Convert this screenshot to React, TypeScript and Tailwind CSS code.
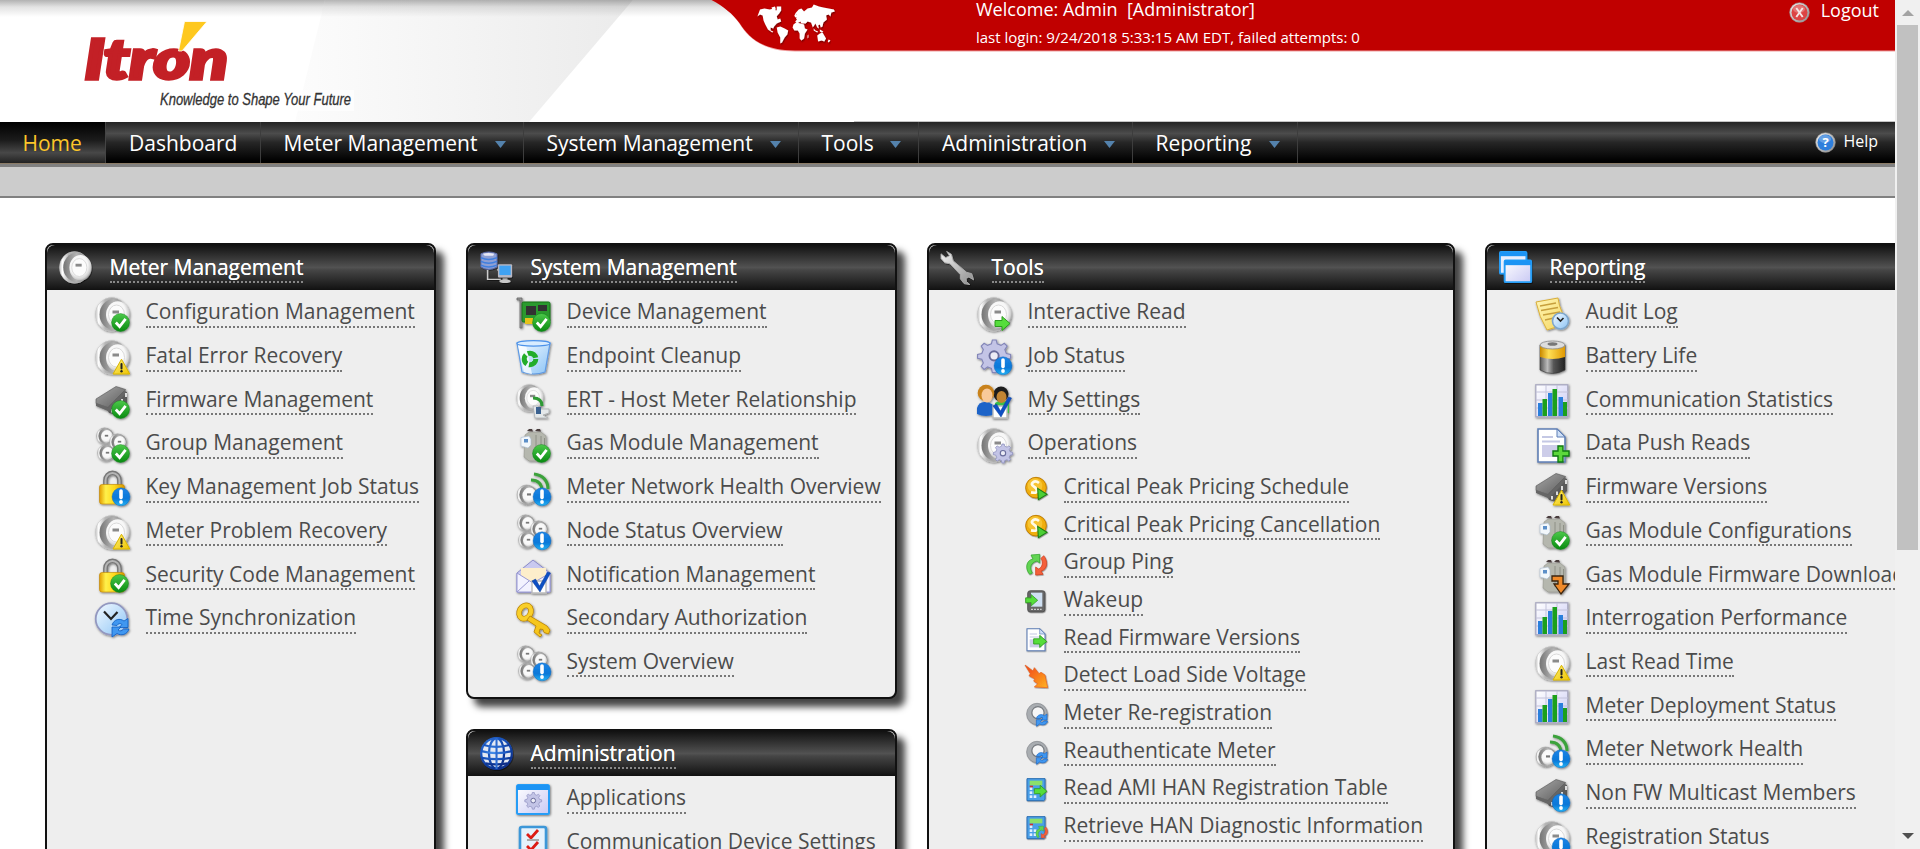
import React from "react";

type IconName =
  | "meterCheck" | "meterWarn" | "meterArrow" | "meterGear" | "meterInfo" | "chipCheck" | "chipWarn" | "chipInfo"
  | "groupCheck" | "groupInfo" | "lockInfo" | "lockCheck" | "clockSync" | "card" | "bin" | "ert" | "gasCheck"
  | "gasDown" | "signal" | "mail" | "key" | "app" | "checklist" | "gearInfo" | "users" | "note" | "battery"
  | "chart" | "docPlus" | "coin" | "ping" | "wakeup" | "docArrow" | "bolt" | "meterSync" | "calcArrow" | "calcPing"
  | "meter" | "servers" | "wrench" | "windows" | "globe";

function Defs() {
  return (
    <svg className="absolute h-0 w-0" aria-hidden="true">
      <defs>
        <linearGradient id="rim" x1="0" y1="0" x2="1" y2="0">
          <stop offset="0" stopColor="#c4c4c4" /><stop offset=".1" stopColor="#fff" /><stop offset=".3" stopColor="#b5b5b5" />
          <stop offset=".7" stopColor="#999" /><stop offset="1" stopColor="#aaa" />
        </linearGradient>
        <linearGradient id="well" x1="0" y1="0" x2="1" y2="0"><stop offset="0" stopColor="#757575" /><stop offset=".5" stopColor="#b4b4b4" /><stop offset="1" stopColor="#8a8a8a" /></linearGradient>
        <radialGradient id="face" cx=".42" cy=".4" r=".62">
          <stop offset="0" stopColor="#fff" /><stop offset=".65" stopColor="#f6f6f6" /><stop offset=".88" stopColor="#cfcfcf" /><stop offset="1" stopColor="#999" />
        </radialGradient>
        <linearGradient id="green" x1="0" y1="0" x2="0" y2="1"><stop offset="0" stopColor="#4cc94a" /><stop offset="1" stopColor="#078a10" /></linearGradient>
        <linearGradient id="blue" x1="0" y1="0" x2="0" y2="1"><stop offset="0" stopColor="#1d84e6" /><stop offset=".6" stopColor="#0878d8" /><stop offset="1" stopColor="#25b4f5" /></linearGradient>
        <linearGradient id="yellow" x1="0" y1="0" x2="1" y2="1"><stop offset="0" stopColor="#fff17a" /><stop offset="1" stopColor="#eec400" /></linearGradient>
        <linearGradient id="lock" x1="0" y1="0" x2="1" y2="0"><stop offset="0" stopColor="#e39c00" /><stop offset=".25" stopColor="#fff04a" /><stop offset=".6" stopColor="#ffd81a" /><stop offset="1" stopColor="#d79600" /></linearGradient>
        <linearGradient id="steel" x1="0" y1="0" x2="1" y2="1"><stop offset="0" stopColor="#a8a8a8" /><stop offset="1" stopColor="#5c5c5c" /></linearGradient>
        <linearGradient id="silver" x1="0" y1="0" x2="1" y2="1"><stop offset="0" stopColor="#f4f4f4" /><stop offset="1" stopColor="#8b8b8b" /></linearGradient>
        <linearGradient id="lilac" x1="0" y1="0" x2="1" y2="1"><stop offset="0" stopColor="#fff" /><stop offset="1" stopColor="#c9c9f4" /></linearGradient>
        <linearGradient id="sky" x1="0" y1="0" x2="1" y2="1"><stop offset="0" stopColor="#f4faff" /><stop offset="1" stopColor="#8cc4f6" /></linearGradient>
        <linearGradient id="batt" x1="0" y1="0" x2="1" y2="0"><stop offset="0" stopColor="#555" /><stop offset=".3" stopColor="#bbb" /><stop offset=".55" stopColor="#555" /><stop offset="1" stopColor="#222" /></linearGradient>
        <linearGradient id="gold" x1="0" y1="0" x2="1" y2="0"><stop offset="0" stopColor="#c98800" /><stop offset=".35" stopColor="#ffdf55" /><stop offset="1" stopColor="#e09800" /></linearGradient>
        <linearGradient id="orange" x1="0" y1="0" x2="1" y2="1"><stop offset="0" stopColor="#f0401a" /><stop offset="1" stopColor="#ffb321" /></linearGradient>
        <radialGradient id="earth" cx=".4" cy=".35" r=".7"><stop offset="0" stopColor="#4a94ee" /><stop offset=".6" stopColor="#1a56c0" /><stop offset="1" stopColor="#0a2c86" /></radialGradient>
        <linearGradient id="paper" x1="0" y1="0" x2="1" y2="1"><stop offset="0" stopColor="#fff6b8" /><stop offset="1" stopColor="#f5d55a" /></linearGradient>
        <linearGradient id="header" x1="0" y1="0" x2="1" y2="0"><stop offset="0" stopColor="#fcfcfc" /><stop offset="1" stopColor="#ebebeb" /></linearGradient>
        <linearGradient id="topShade" x1="0" y1="0" x2="0" y2="1"><stop offset="0" stopColor="#000" stopOpacity=".28" /><stop offset=".4" stopColor="#000" stopOpacity=".1" /><stop offset="1" stopColor="#000" stopOpacity="0" /></linearGradient>
        <filter id="sh" x="-20%" y="-20%" width="150%" height="150%"><feDropShadow dx="0.8" dy="1" stdDeviation="0.8" floodOpacity=".5" /></filter>
      </defs>
    </svg>
  );
}

const Check = () => (
  <g><circle cx="25.5" cy="25.5" r="9" fill="url(#green)" stroke="#0a7a12" strokeWidth=".4" />
    <path d="M20.800 25.500l3.800 4 6-7.600" fill="none" stroke="#fff" strokeWidth="2.800" /></g>
);
const Info = () => (
  <g><circle cx="26" cy="25.800" r="9" fill="url(#blue)" stroke="#0a5fb4" strokeWidth=".4" />
    <path d="M26 20v6.600" stroke="#fff" strokeWidth="3.600" strokeLinecap="round" /><circle cx="26" cy="31" r="1.900" fill="#fff" /></g>
);
const Warn = () => (
  <g><path d="M26.500 19.200L34.800 34H18z" fill="url(#yellow)" stroke="#d8b400" strokeLinejoin="round" />
    <path d="M26.500 24v4.500" stroke="#222" strokeWidth="2" strokeLinecap="round" /><circle cx="26.500" cy="31.300" r="1.200" fill="#222" /></g>
);
const Meter = () => (
  <g><ellipse cx="16.500" cy="17.400" rx="16" ry="16.800" fill="url(#rim)" stroke="#c6c6c6" strokeWidth=".6" />
    <ellipse cx="18.500" cy="17.400" rx="14" ry="15.200" fill="url(#well)" />
    <ellipse cx="22.800" cy="17.800" rx="11.800" ry="13.600" fill="url(#face)" />
    <ellipse cx="21.500" cy="17.500" rx="8" ry="9.500" fill="#fcfcfc" stroke="#dadada" />
    <rect x="17.500" y="13.500" width="6.500" height="3" fill="#8a8a8a" /></g>
);
const SmallMeter = ({ x, y }: { x: number; y: number }) => (
  <g transform={`translate(${x} ${y})`}><ellipse cx="7.500" cy="8" rx="8" ry="8.200" fill="url(#rim)" stroke="#999" strokeWidth=".4" />
    <ellipse cx="9" cy="8" rx="7.600" ry="7.800" fill="url(#well)" />
    <ellipse cx="10" cy="8.500" rx="6" ry="6.500" fill="url(#face)" />
    <rect x="7.800" y="6.800" width="3.400" height="1.800" fill="#777" /></g>
);
const Group = () => (<g><SmallMeter x={2} y={0} /><SmallMeter x={15} y={6} /><SmallMeter x={3} y={17} /></g>);
const Chip = () => (
  <g><path d="M11 23l3 6 7 2 11-11V8l-3-1z" fill="#5a5a5a" />
    <path d="M1 15L21 2.5l9.500 3L13 23.500 1 19.500z" fill="url(#steel)" stroke="#555" strokeWidth=".6" />
    <path d="M13 23.500L30.500 5.500V10L14 27.500 1 22v-3z" fill="#666" />
    <path d="M17 25v3.500M22 20.500V24M27 15v4M31 9v4" stroke="#ddd" strokeWidth="2" /></g>
);
const Lock = () => (
  <g><path d="M10.500 15V9.500a6.500 7 0 0 1 14 0V15" fill="none" stroke="#777" strokeWidth="4.800" />
    <path d="M10.500 15V9.500a6.500 7 0 0 1 14 0V15" fill="none" stroke="#b5b5b5" strokeWidth="2" />
    <rect x="4.500" y="13.500" width="25" height="19.500" rx="2.500" fill="url(#lock)" stroke="#c08600" strokeWidth=".6" /></g>
);
const Gas = () => (
  <g><path d="M9 7l4-3h12l5 4v22l-6 3H13l-5-4z" fill="#b5b7ae" stroke="#94968d" strokeWidth=".6" />
    <path d="M11 3l2-2h3l1 2.500zM19 3l2-2h3l1 2.500z" fill="#4a3c3c" />
    <path d="M20 7v21M25 8v20M28.500 10v16" stroke="#8e9086" />
    <path d="M5 9.500l8-1.500 2 3v6l-3 3-7-2z" fill="#f2f7fb" stroke="#abc" strokeWidth=".6" /><rect x="8" y="11" width="4" height="3.500" fill="#5b8fc8" /></g>
);
const gearPath = "M16 0h4l1 4 4 1.600 3.400-2.200 3 3L29 10l1.600 4 4.400 1v4l-4.400 1L29 24l2.200 3.600-3 3L25 28l-4 1.600-1 4.400h-4l-1-4.400L11 28l-3.600 2.600-3-3L6.600 24 5 20l-4.400-1v-4L5 14l1.600-4L4.400 6.400l3-3L11 5.600 15 4z";
const Gear = ({ t = "" }: { t?: string }) => (
  <g transform={t}><path d={gearPath} fill="#c3c4e6" stroke="#8386b8" strokeWidth="1.200" /><circle cx="17.800" cy="16.500" r="4.800" fill="#ececf6" stroke="#6a6d9c" strokeWidth="2" /></g>
);
const Arrow = ({ t }: { t: string }) => (
  <path transform={t} d="M0 4h7V0l8 7-8 7v-4H0z" fill="#55dd3a" stroke="#2c9a1e" strokeWidth="1" />
);
const SyncArrows = () => (
  <g fill="#3f97f0" stroke="#0d5cc0" strokeWidth=".8"><path d="M17 23c2-6 8-7 12-4l4-2.500v9h-9l3-3c-2-1.500-4-1-5 1z" /><path d="M34 27c-2 6-8 7-12 4.500L17 35V25h9l-3 3c2 1.500 4 1 5.500-1z" /></g>
);
const Ping = () => (
  <g><path d="M7 32C0 24 1 11 12 9L9 3 22 2v13l-4-3c-9 2-12 10-7 18z" fill="#62d452" stroke="#2fa42a" />
    <path d="M28 4c7 8 6 21-4 23l3 5-11 1V21l4 3c6-2 8-10 4-16z" fill="#f4603a" stroke="#d03a18" /></g>
);
const Doc = () => (
  <g><path d="M3 1h19l8 8v25H3z" fill="#fff" stroke="#5f7fb5" strokeWidth="1.600" /><path d="M22 1l8 8h-8z" fill="#cfe0f7" stroke="#5f7fb5" />
    <path d="M7 9h11M7 13.500h18" stroke="#c4c8e4" strokeWidth="1.800" /><rect x="7" y="17" width="18" height="12" fill="#cdcde9" /></g>
);
const Calc = () => (
  <g><path d="M3 1h27v31l-2 2H3z" fill="#4a9fe8" stroke="#2b6fb4" strokeWidth="1.500" /><rect x="7" y="4" width="19" height="7" fill="#8be06a" />
    <g fill="#dfefff"><rect x="7" y="14" width="4" height="4" /><rect x="7" y="20" width="4" height="4" /><rect x="7" y="26" width="4" height="4" /><rect x="13" y="26" width="4" height="4" /><rect x="13" y="20" width="4" height="4" /></g>
    <rect x="7" y="11.500" width="5" height="2.500" fill="#c33" /></g>
);
const BlueTick = () => (
  <g><path d="M16 22h14v12H16z" fill="#fff" stroke="#bbb" strokeWidth="1.400" /><path d="M16 22l3.500-2 4 7 8-14 3 1L24 33z" fill="#0e50c4" stroke="#0a3c98" strokeWidth=".5" /></g>
);

function art(name: IconName): React.ReactNode {
  switch (name) {
    case "meter": return <Meter />;
    case "meterCheck": return <><Meter /><Check /></>;
    case "meterWarn": return <><Meter /><Warn /></>;
    case "meterInfo": return <><Meter /><Info /></>;
    case "meterArrow": return <><Meter /><Arrow t="translate(18 19.500)" /></>;
    case "meterGear": return <><Meter /><Gear t="translate(16 16) scale(.56)" /></>;
    case "meterSync": return <><g transform="translate(2 0) scale(.97)"><ellipse cx="16.500" cy="17" rx="16" ry="16.500" fill="#a9adb1" stroke="#84888c" /><circle cx="18" cy="15" r="9.500" fill="#f6f6f6" stroke="#777b80" strokeWidth="2" /></g><SyncArrows /></>;
    case "chipCheck": return <><Chip /><Check /></>;
    case "chipWarn": return <><Chip /><Warn /></>;
    case "chipInfo": return <><Chip /><Info /></>;
    case "groupCheck": return <><Group /><Check /></>;
    case "groupInfo": return <><Group /><Info /></>;
    case "lockInfo": return <><Lock /><Info /></>;
    case "lockCheck": return <><Lock /><g transform="translate(-1 -1)"><Check /></g></>;
    case "clockSync": return <><circle cx="16.500" cy="17" r="15.800" fill="url(#sky)" stroke="#9398c0" strokeWidth="1.800" /><path d="M9 9.500l7 7.500 6.500-7" fill="none" stroke="#222" strokeWidth="2.200" /><SyncArrows /></>;
    case "card": return <><path d="M1 1h5v30H4V3H1z" fill="#999" stroke="#666" strokeWidth=".8" /><rect x="6" y="5" width="28" height="20" rx="1.500" fill="#2a9a2e" stroke="#16701a" /><rect x="10" y="9" width="10" height="9" fill="#333" /><rect x="22" y="8" width="9" height="6" fill="#333" /><rect x="9" y="21" width="8" height="6" fill="#e6c21a" /><Check /></>;
    case "bin": return <><path d="M1 3l5 29q12 4 23 0l5-29z" fill="url(#sky)" stroke="#5f9ae4" strokeWidth="1.200" /><path d="M2 5l6 27q6 2 8 2L10 5z" fill="#fff" opacity=".7" /><ellipse cx="17.500" cy="3.400" rx="16.500" ry="2.800" fill="#d8ecff" stroke="#4c92ea" strokeWidth="1.200" /><circle cx="14" cy="19" r="5.800" fill="none" stroke="#23ad2a" strokeWidth="5" strokeDasharray="10 2.150" /><path d="M14 11l3 2-3 3M7 22l1-4 3 2M20 22l-3 3-1-4" fill="#23ad2a" /></>;
    case "ert": return <><g transform="scale(.8)"><Meter /></g><path d="M17 14c7 0 9 4 9 8" fill="none" stroke="#2f9a36" strokeWidth="3" /><path d="M17 22h5l3 3h8v4l-6 2 5 3H19z" fill="#e4e8ea" stroke="#a9adb0" strokeWidth=".8" /><rect x="20" y="23" width="5" height="7" fill="#3a6290" /></>;
    case "gasCheck": return <><Gas /><Check /></>;
    case "gasDown": return <><Gas /><path d="M17 17h11v8h6l-8 10-7-10h4v-3h-6z" fill="#f08a2c" stroke="#3a2410" strokeWidth="1.300" /></>;
    case "signal": return <><g transform="translate(1 13) scale(1.200)"><SmallMeter x={0.5} y={1} /></g><path d="M15 9c7 0 11 4 11 11M18 3c9 1 14 7 14 15" fill="none" stroke="#3ba23a" strokeWidth="3" /><Info /></>;
    case "mail": return <><path d="M1 14L17 1l17 13v19H1z" fill="#c9c9f0" stroke="#8a8ac8" /><path d="M5 9h25v14H5z" fill="#fdeecb" /><path d="M1 14l16 10 17-10v19H1z" fill="#f3f3ff" stroke="#9a9ad4" /><path d="M1 33l12-11" stroke="#9a9ad4" /><BlueTick /></>;
    case "key": return <><ellipse cx="9" cy="10" rx="5.600" ry="7" transform="rotate(30 9 10)" fill="none" stroke="#b98200" strokeWidth="5.600" /><ellipse cx="9" cy="10" rx="5.600" ry="7" transform="rotate(30 9 10)" fill="none" stroke="#f9cf2c" strokeWidth="4.200" /><path d="M14 14L31 24l3 4-1.500 4-4.500-1.500-1-3-3-.5-1 4 3 2-2 2-6-5 2-6-9-6z" fill="#f6c61e" stroke="#b98200" strokeWidth=".8" /></>;
    case "app": return <><rect x="1" y="2" width="32" height="29" rx="1.500" fill="url(#lilac)" stroke="#259df6" strokeWidth="2" /><path d="M1 2h32v5H1z" fill="#1a94f4" /><Gear t="translate(8.500 9.500) scale(.49)" /></>;
    case "checklist": return <><rect x="4" y="1" width="26" height="33" rx="2" fill="#e6f2fc" stroke="#3d97d8" strokeWidth="2.600" /><path d="M11 8l4 4 7-8M11 20l4 4 7-8" fill="none" stroke="#dc1c14" strokeWidth="2.800" /><path d="M11 14h12M11 26h12" stroke="#aaa" strokeWidth="2" /></>;
    case "gearInfo": return <><Gear t="scale(.96)" /><Info /></>;
    case "users": return <><path d="M18 19q8-6 14 1v9H18z" fill="#3cbf4a" /><circle cx="24" cy="10" r="7.500" fill="#1c1c1c" /><ellipse cx="24.500" cy="13" rx="5" ry="6" fill="#c28432" /><path d="M0 30v-6q2-7 9-6t9 6v6q-9 4-18 0z" fill="#1d63c8" /><circle cx="9" cy="9" r="8.300" fill="#c9821a" /><ellipse cx="10" cy="11.500" rx="5.500" ry="7" fill="#f8c99a" /><BlueTick /></>;
    case "note": return <><path d="M1 5L23 1q1 8 4 14t5 10q-8 5-20 8Q4 20 1 5z" fill="url(#paper)" stroke="#d8ae3a" /><path d="M5 9l16-3M6 13.500l17-3M8 18l17-3M10 23l9-2" stroke="#c79f3c" strokeWidth="1.300" /><circle cx="25.500" cy="24" r="8" fill="url(#sky)" stroke="#7ea6cc" strokeWidth="1.600" /><path d="M22 20.500l3.500 3.500 3-3" fill="none" stroke="#222" strokeWidth="1.600" /></>;
    case "battery": return <><path d="M5 5v25q12.500 7 25 0V5z" fill="url(#batt)" stroke="#333" strokeWidth=".6" /><path d="M5 6v11q12.500 4 25 0V6z" fill="url(#gold)" /><ellipse cx="17.500" cy="5" rx="12.500" ry="4" fill="#ddd" stroke="#888" strokeWidth=".8" /><ellipse cx="17.500" cy="4" rx="5" ry="1.800" fill="#777" /></>;
    case "chart": return <><rect x=".8" y=".8" width="32" height="32" fill="url(#lilac)" stroke="#a9a9c0" strokeWidth="1.300" /><path d="M1 8h32M1 16h32M1 24h32M11 1v32M22 1v32" stroke="#c2c2da" /><g fill="#2a7fdc"><rect x="3" y="19" width="4.500" height="13" /><rect x="13" y="9" width="4.500" height="23" /><rect x="23.500" y="13" width="4.500" height="19" /></g><g fill="#1da01d"><rect x="7.500" y="15" width="4.500" height="17" /><rect x="17.500" y="5" width="4.500" height="27" /><rect x="28" y="18" width="4" height="14" /></g></>;
    case "docPlus": return <><Doc /><path d="M23 18h5v5h6v5h-6v6h-5v-6h-5v-5h5z" fill="#5bd83a" stroke="#127a12" strokeWidth="1.400" /></>;
    case "docArrow": return <><Doc /><Arrow t="translate(13 11) scale(1.300)" /></>;
    case "coin": return <><circle cx="16.500" cy="16" r="15.500" fill="#f0ae10" stroke="#c07d00" strokeWidth="1.400" /><circle cx="15" cy="13" r="11" fill="#fbd24a" opacity=".6" /><path d="M21 9q-5-4-9-1t1 6 5 7-9 2" fill="none" stroke="#fffbe8" strokeWidth="4" /><path d="M19 17l14 9-13 8z" fill="#4ccf34" stroke="#1c7a12" strokeWidth="1.600" /></>;
    case "ping": return <Ping />;
    case "wakeup": return <><rect x="4" y="1" width="26" height="32" rx="4" fill="#666" stroke="#444" /><rect x="9" y="4" width="17" height="21" fill="#cfe0f2" /><path d="M9 29h16" stroke="#ccc" strokeWidth="2" strokeDasharray="3 1.500" /><Arrow t="translate(1 7) scale(1.200)" /></>;
    case "bolt": return <path d="M0 0l12 9 2-5 7 9 3-2 6 4 4 19-20-1 5-5-6-4 2-3-9-5 2-3z" fill="url(#orange)" stroke="#e8601c" />;
    case "calcArrow": return <><Calc /><Arrow t="translate(14 11) scale(1.250)" /></>;
    case "calcPing": return <><Calc /><g transform="translate(15 14) scale(.58)"><Ping /></g></>;
    case "servers": return <><path d="M8 20v10h14M18 20h4" fill="none" stroke="#ccc" strokeWidth="1.500" /><path d="M1 3q8-4 17 0v14q-9 5-17 0z" fill="#8d9fd4" stroke="#5a6aa8" /><path d="M1 7q8 4 17 0M1 11q8 4 17 0M1 15q8 4 17 0" fill="none" stroke="#3f7fe0" strokeWidth="1.600" /><path d="M3 3q6-2 12 0l-1 2H5z" fill="#e8e8f4" /><rect x="19" y="14" width="15" height="14" rx="1" fill="#b8b8c4" /><rect x="20.500" y="15.500" width="12" height="10" fill="#3fa2f2" /><path d="M24 28h5v3h-5z" fill="#888" /><ellipse cx="26.500" cy="32" rx="6" ry="2" fill="#c8c8c8" /></>;
    case "wrench": return <path d="M6 .5l5 3 2 7L27 22.500l5.500 1.500 2 6.500-5-3-3 1.500.5 3.500 3.500 3-6-1-4-5v-4.500L9.500 13.500 4 12.500 0 8V3l5 4 4-2z" fill="url(#silver)" stroke="#aaa" strokeWidth="1" />;
    case "windows": return <><rect x="1" y="1" width="28" height="23" rx="1" fill="#e8eefc" stroke="#259df6" strokeWidth="2" /><path d="M1 1h28v4.500H1z" fill="#1a94f4" /><rect x="6" y="10" width="28" height="23" rx="1" fill="url(#lilac)" stroke="#259df6" strokeWidth="2" /><path d="M6 10h28v5H6z" fill="#1a94f4" /></>;
    case "globe": return <><circle cx="17.500" cy="17.500" r="16.800" fill="#e4e9f2" /><g fill="none" stroke="url(#earth)" strokeWidth="2.400"><circle cx="17.500" cy="17.500" r="16.200" /><ellipse cx="17.500" cy="17.500" rx="8" ry="16" /><path d="M4 8.500q13 4 27 0M1.500 15q16 4 32 0M2 22q15 3 31 0M6 28q11 2 23 0" /></g><path d="M17.500 1v33" stroke="#2b6bd0" strokeWidth="2.200" /></>;
  }
}

function Icon({ name, className }: { name: IconName; className: string }) {
  return (
    <svg viewBox="0 0 36 36" className={`shrink-0 overflow-visible ${className}`}>
      <g filter="url(#sh)">{art(name)}</g>
    </svg>
  );
}

function Item({ icon, label }: { icon: IconName; label: string }) {
  return (
    <li className="flex h-[43.7px] items-start pl-12">
      <Icon name={icon} className="mt-[3.500px] h-[36px] w-[36px]" />
      <a className="mt-[4.400px] ml-[14.500px] border-b-2 border-dotted border-[#777] leading-[28.600px] whitespace-nowrap text-[#4b4b4b]">{label}</a>
    </li>
  );
}

function SubItem({ icon, label }: { icon: IconName; label: string }) {
  return (
    <li className="flex h-[37.650px] items-start pl-24">
      <Icon name={icon} className="mt-[9.500px] h-6 w-6" />
      <a className="mt-[4.400px] ml-[14.500px] border-b-2 border-dotted border-[#777] leading-[28.600px] whitespace-nowrap text-[#4b4b4b]">{label}</a>
    </li>
  );
}

function Panel({ icon, title, className, children }: { icon: IconName; title: string; className: string; children: React.ReactNode }) {
  return (
    <section className={`shrink-0 rounded-[8px] border-2 border-[#111] bg-[#eee] shadow-[8px_8px_7px_#444] ${className}`}>
      <header className="flex h-[45px] items-start rounded-t-[8px] bg-[linear-gradient(#111_0%,#525252_50%,#454545_56%,#111_100%)] pl-3">
        <Icon name={icon} className="mt-[6px] h-[34px] w-[34px]" />
        <h2 className="mt-[7.600px] ml-[16.500px] border-b-2 border-dotted border-[#888] leading-[28.600px] whitespace-nowrap text-white [text-shadow:0_0_0.5px_#fff]">{title}</h2>
      </header>
      <ul className="pt-[3px]">{children}</ul>
    </section>
  );
}

const meterItems: [IconName, string][] = [
  ["meterCheck", "Configuration Management"], ["meterWarn", "Fatal Error Recovery"], ["chipCheck", "Firmware Management"],
  ["groupCheck", "Group Management"], ["lockInfo", "Key Management Job Status"], ["meterWarn", "Meter Problem Recovery"],
  ["lockCheck", "Security Code Management"], ["clockSync", "Time Synchronization"],
];
const systemItems: [IconName, string][] = [
  ["card", "Device Management"], ["bin", "Endpoint Cleanup"], ["ert", "ERT - Host Meter Relationship"], ["gasCheck", "Gas Module Management"],
  ["signal", "Meter Network Health Overview"], ["groupInfo", "Node Status Overview"], ["mail", "Notification Management"],
  ["key", "Secondary Authorization"], ["groupInfo", "System Overview"],
];
const adminItems: [IconName, string][] = [["app", "Applications"], ["checklist", "Communication Device Settings"]];
const toolItems: [IconName, string][] = [["meterArrow", "Interactive Read"], ["gearInfo", "Job Status"], ["users", "My Settings"], ["meterGear", "Operations"]];
const operationItems: [IconName, string][] = [
  ["coin", "Critical Peak Pricing Schedule"], ["coin", "Critical Peak Pricing Cancellation"], ["ping", "Group Ping"], ["wakeup", "Wakeup"],
  ["docArrow", "Read Firmware Versions"], ["bolt", "Detect Load Side Voltage"], ["meterSync", "Meter Re-registration"],
  ["meterSync", "Reauthenticate Meter"], ["calcArrow", "Read AMI HAN Registration Table"], ["calcPing", "Retrieve HAN Diagnostic Information"],
];
const reportItems: [IconName, string][] = [
  ["note", "Audit Log"], ["battery", "Battery Life"], ["chart", "Communication Statistics"], ["docPlus", "Data Push Reads"],
  ["chipWarn", "Firmware Versions"], ["gasCheck", "Gas Module Configurations"], ["gasDown", "Gas Module Firmware Downloads"],
  ["chart", "Interrogation Performance"], ["meterWarn", "Last Read Time"], ["chart", "Meter Deployment Status"],
  ["signal", "Meter Network Health"], ["chipInfo", "Non FW Multicast Members"], ["meterInfo", "Registration Status"],
];
const navItems: [string, string, boolean][] = [
  ["Dashboard", "w-[154.500px]", false], ["Meter Management", "w-[263px]", true], ["System Management", "w-[275px]", true],
  ["Tools", "w-[120.500px]", true], ["Administration", "w-[213.500px]", true], ["Reporting", "w-[165px]", true],
];

function Logo() {
  return (
    <svg viewBox="0 0 900 122" className="absolute inset-0 h-[122px] w-[900px]">
      <path d="M325 0H633L529 122H295z" fill="url(#header)" />
      <path d="M325 0H633L618.500 17H320.800z" fill="url(#topShade)" />
      <rect x="158" y="90" width="196" height="21" fill="#fff" opacity=".6" />
      <text x="84.500" y="78.500" textLength="143.500" lengthAdjust="spacingAndGlyphs" className="fill-[#c32026] stroke-[#c32026] stroke-[3.500px] font-['Lato'] text-[56px] font-black italic">Itron</text>
      <path d="M184.500 21.500H207L182 51h-3.500z" fill="#fec81e" stroke="#fff" strokeWidth=".8" />
      <text x="160" y="105" textLength="191" lengthAdjust="spacingAndGlyphs" className="fill-[#333] stroke-[#333] stroke-[0.300px] font-['Liberation_Sans'] text-[16px] italic">Knowledge to Shape Your Future</text>
    </svg>
  );
}

function Banner() {
  return (
    <svg viewBox="0 0 1190 54" preserveAspectRatio="none" className="absolute top-0 left-[705px] h-[54px] w-[1190px]">
      <path d="M6 0C18 6 28 14 34 23C43 38 58 51.500 90 51.500H1190V0z" fill="#f0a0a0" />
      <path d="M6.500 0C18 6 28 14 34.500 23C44 38 58 50.500 90 50.500H1190V0z" fill="#c00000" />
      <g fill="#fff" filter="url(#sh)" transform="translate(7.500 -.5) scale(.88 1)">
        <path d="M54 10l5-1 6 1 5-1 2 2 3-1 1 3-3 4 1 3 3-1 1 3-5 2-3 3-1 2-3-1 0 3 3 1-1 1-5-3-3-5-2-4-1-5-3-1-3 2zM67 8l4-1 1 3-4 0zM73 7l5 0 0 4-3 4-2-3z" />
        <path d="M73 28l4-1 5 2 4 2-1 4-3 3-3 5-2 1 0-6-3-5z" />
        <path d="M92 25l3-2 5 1 4 1 1 4 3 1-3 4-1 5-3 2-2-2 0-5-2-3-4 0-2-3z" />
        <path d="M95 19l1-4-2-1 4-4 3-1 3 3 4-3 5-1 2-3 6 2 5 1 6 1 6 1 1 2-4 1-1 4-2-2-3 1 1 4-4 3-1 4-2 1-1-3-2 1 1 3-2-1-2-4-3 4-2-5-4-1-2 2-5 0-1-2-4 2-2-2 2-2zM93 16l2-3 1 4-2 1z" />
        <path d="M119 36l3-2 3-1 2 3 2 3-2 3-3-1-4 1zM115 29l2 2 3 1-1 1-4-2zM122 30l4 2-2 1-2-1zM132 40l2 1-2 2-1-1zM108 36l1-1 0 3-1 1z" />
      </g>
    </svg>
  );
}

function RoundIcon({ kind }: { kind: "logout" | "help" }) {
  const logout = kind === "logout";
  return (
    <svg viewBox="0 0 21 21" className="h-[21px] w-[21px]">
      <circle cx="10.500" cy="10.500" r="9.800" fill="url(#silver)" stroke="#999" strokeWidth=".6" />
      <circle cx="10.500" cy="10.500" r="8" fill={logout ? "#dc4444" : "#2f7fdc"} />
      <ellipse cx="10" cy="7" rx="6" ry="4" fill="#fff" opacity=".25" />
      {logout
        ? <path d="M7.300 6l6.400 9M13.700 6l-6.400 9" stroke="#f4e6e6" strokeWidth="1.900" />
        : <text x="10.500" y="15.200" textAnchor="middle" className="fill-white font-['Open_Sans'] text-[13px] font-bold">?</text>}
    </svg>
  );
}

export default function App() {
  return (
    <div className="flex h-[849px] w-[1920px] overflow-hidden bg-white font-['Open_Sans',sans-serif] text-[21px]">
      <Defs />
      <div className="h-full w-[1895px] overflow-hidden">
        <div className="relative flex h-[122px] justify-between bg-[linear-gradient(#b2b2b2,#e3e3e3_7px,#fff_17px)]">
          <Logo />
          <Banner />
          <div className="absolute bottom-0 left-[854px] h-px w-[1041px] bg-[#c4c4c4]" />
          <div className="relative pl-[976px] whitespace-pre text-white">
            <p className="mt-[-3px] text-[18px] leading-[25px]">{"Welcome: Admin  [Administrator]"}</p>
            <p className="mt-[5px] text-[15px] leading-[20px]">last login: 9/24/2018 5:33:15 AM EDT, failed attempts: 0</p>
          </div>
          <div className="relative mt-[2px] mr-4 flex h-[21px] items-center gap-[11px] text-[18px] text-white">
            <RoundIcon kind="logout" />
            <span className="relative -top-[2px]">Logout</span>
          </div>
        </div>
        <nav className="flex h-[42px] border-b border-[#8b7b66] bg-[linear-gradient(#242424_0%,#4c4c4c_28%,#262626_50%,#111_75%,#000_95%)] leading-[43px] text-white">
          <a className="w-[106px] border-r border-[#444] bg-[linear-gradient(#000,#1c1c1c_45%,#484848_75%,#222)] pl-[22.500px] text-[#fcc62a]">Home</a>
          {navItems.map(([label, width, menu]) => (
            <a key={label} className={`flex h-[41px] shrink-0 items-center justify-between border-r border-[#3d3d3d] pr-[17px] pl-[23px] whitespace-nowrap ${width}`}>
              <span className="pt-px">{label}</span>
              {menu && <svg viewBox="0 0 11 7" className="mt-1 h-[7px] w-[11px]"><path d="M0 0h11L5.500 7z" fill="#5482ac" /></svg>}
            </a>
          ))}
          <a className="mr-[17px] ml-auto flex h-[41px] items-center gap-[7px] text-[16px]">
            <RoundIcon kind="help" />
            <span className="relative -top-[1px]">Help</span>
          </a>
        </nav>
        <div className="h-[34px] border-t-[3px] border-b-2 border-[#808080] bg-[#ccc]" />
        <main className="flex items-start gap-[30px] pt-[45px] pl-[45px]">
          <Panel icon="meter" title="Meter Management" className="h-[700px] w-[391px]">
            {meterItems.map(([i, l]) => <Item key={l} icon={i} label={l} />)}
          </Panel>
          <div className="flex shrink-0 flex-col gap-[30px]">
            <Panel icon="servers" title="System Management" className="h-[456px] w-[431px]">
              {systemItems.map(([i, l]) => <Item key={l} icon={i} label={l} />)}
            </Panel>
            <Panel icon="globe" title="Administration" className="h-[300px] w-[431px]">
              {adminItems.map(([i, l]) => <Item key={l} icon={i} label={l} />)}
            </Panel>
          </div>
          <Panel icon="wrench" title="Tools" className="h-[700px] w-[528px]">
            {toolItems.map(([i, l]) => <Item key={l} icon={i} label={l} />)}
            {operationItems.map(([i, l]) => <SubItem key={l} icon={i} label={l} />)}
          </Panel>
          <Panel icon="windows" title="Reporting" className="h-[700px] w-[460px]">
            {reportItems.map(([i, l]) => <Item key={l} icon={i} label={l} />)}
          </Panel>
        </main>
      </div>
      <div className="flex h-full w-[25px] flex-col items-center bg-[#f0f0f0] pt-[10px] pb-[10px]">
        <svg viewBox="0 0 12 6" className="h-[6px] w-[12px]"><path d="M6 0l6 6H0z" fill="#a3a3a3" /></svg>
        <div className="mt-[9px] h-[525px] w-[21px] bg-[#c1c1c1]" />
        <svg viewBox="0 0 12 6" className="mt-auto h-[6px] w-[12px]"><path d="M0 0h12L6 6z" fill="#505050" /></svg>
      </div>
    </div>
  );
}
